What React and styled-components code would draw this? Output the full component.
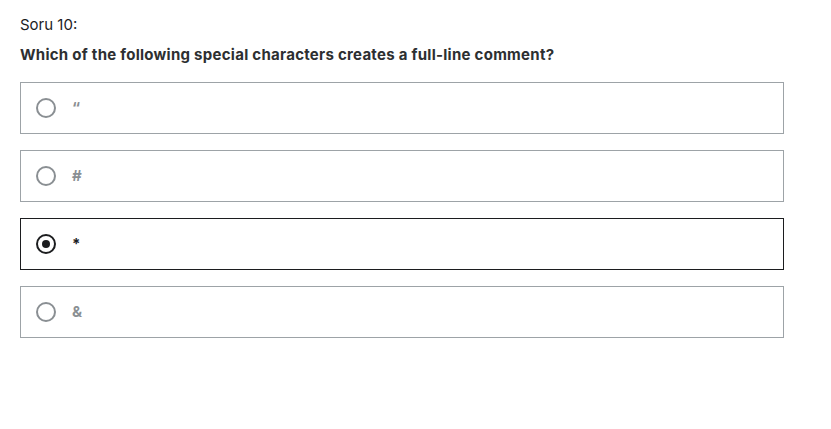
import React, { useState } from "react";
import styled, { createGlobalStyle } from "styled-components";

const Global = createGlobalStyle`
  html, body { margin: 0; padding: 0; background: #fff; }
  body { font-family: Inter, "Noto Sans", sans-serif; color: #1c1d1f; }
`;

const Page = styled.div`
  padding: 15px 47px 0 20px;
`;

const Label = styled.div`
  font-size: 15px;
  line-height: 20px;
  color: #1c1d1f;
  margin-bottom: 10px;
`;

const Question = styled.div`
  font-size: 15px;
  line-height: 20px;
  font-weight: 700;
  letter-spacing: 0.27px;
  color: #2d2f31;
  margin-bottom: 17px;
`;

const List = styled.div`
  display: flex;
  flex-direction: column;
  gap: 16px;
`;

const Option = styled.label`
  display: flex;
  align-items: center;
  gap: 16px;
  height: 52px;
  box-sizing: border-box;
  padding: 0 15px;
  border: 1px solid ${(p) => (p.$selected ? "#1c1d1f" : "#9da3a7")};
  cursor: pointer;
`;

const Radio = styled.span`
  flex: none;
  width: 20px;
  height: 20px;
  box-sizing: border-box;
  border-radius: 50%;
  border: 2px solid ${(p) => (p.$selected ? "#1c1d1f" : "#8a8f93")};
  display: flex;
  align-items: center;
  justify-content: center;
  &::after {
    content: "";
    width: 8px;
    height: 8px;
    border-radius: 50%;
    background: #1c1d1f;
    display: ${(p) => (p.$selected ? "block" : "none")};
  }
`;

const OptionText = styled.span`
  font-size: 15px;
  line-height: 20px;
  font-weight: 700;
  color: ${(p) => (p.$selected ? "#1c1d1f" : "#8a8f93")};
`;

const options = ["“", "#", "*", "&"];

export default function App() {
  const [sel, setSel] = useState(2);
  return (
    <Page>
      <Global />
      <Label>Soru 10:</Label>
      <Question>
        Which of the following special characters creates a full-line comment?
      </Question>
      <List>
        {options.map((o, i) => (
          <Option key={i} $selected={sel === i} onClick={() => setSel(i)}>
            <Radio $selected={sel === i} />
            <OptionText $selected={sel === i}>{o}</OptionText>
          </Option>
        ))}
      </List>
    </Page>
  );
}
